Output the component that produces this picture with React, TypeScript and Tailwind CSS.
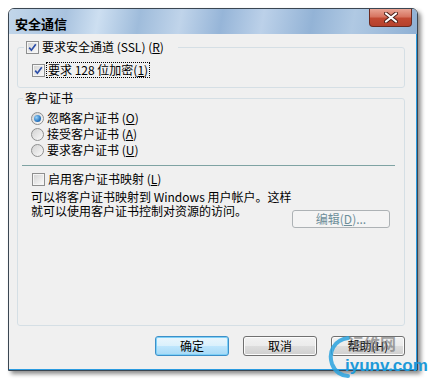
import React from 'react';

const cjk = "font-['Noto_Sans_CJK_SC','Noto_Sans',sans-serif]";

function CheckBox({ checked }: { checked?: boolean }) {
  return (
    <span className="flex h-[13px] w-[13px] shrink-0 items-center justify-center border border-[#8e8f8f] bg-white">
      <span className="flex h-[11px] w-[11px] items-center justify-center border border-[#f5f5f5] bg-[linear-gradient(135deg,#d6d6d6,#f8f8f8)]">
        {checked && (
          <svg width="9" height="9" viewBox="0 0 9 9">
            <path d="M1.2 4.6 L3.4 7.2 L7.8 1.2" fill="none" stroke="#2d4fa8" strokeWidth="1.7" />
          </svg>
        )}
      </span>
    </span>
  );
}

function Radio({ checked }: { checked?: boolean }) {
  return (
    <span className="flex h-[13px] w-[13px] shrink-0 items-center justify-center rounded-full border border-[#8e8f8f] bg-[linear-gradient(135deg,#d2d2d2,#fafafa)]">
      {checked && (
        <span className="h-[7px] w-[7px] rounded-full bg-[radial-gradient(circle_at_35%_35%,#9bd3f7,#2a78c2_60%,#1c5b9c)]" />
      )}
    </span>
  );
}

function Label({ text, k }: { text: string; k: string }) {
  return (
    <span className="whitespace-pre">
      {text}(<u>{k}</u>)
    </span>
  );
}

function DlgButton({ children, primary }: { children: React.ReactNode; primary?: boolean }) {
  return (
    <button
      className={
        primary
          ? 'h-[20px] w-[74px] rounded-[3px] border border-[#3c8fc8] bg-[linear-gradient(#eaf6fd_0%,#d9f0fc_50%,#bee6fd_51%,#a7d9f5_100%)] text-[12px] text-black shadow-[inset_0_0_0_1px_#7ed0f7]'
          : 'h-[20px] w-[74px] rounded-[3px] border border-[#707070] bg-[linear-gradient(#f2f2f2_0%,#ebebeb_50%,#dddddd_51%,#cfcfcf_100%)] text-[12px] text-black shadow-[inset_0_0_0_1px_#fcfcfc]'
      }
    >
      {children}
    </button>
  );
}

export default function App() {
  return (
    <div className={`relative h-[384px] w-[430px] overflow-hidden bg-white pl-[8px] pt-[8px] ${cjk}`}>
      <div className="flex h-[363px] w-[410px] flex-col overflow-hidden rounded-t-[6px] border border-[#3a4652] shadow-[3px_3px_4px_rgba(0,0,0,0.45)]">
        {/* title bar */}
        <div className="flex h-[25px] shrink-0 items-start justify-between bg-[linear-gradient(100deg,#c2d6ea_0%,#a9c3df_14%,#cddff1_22%,#9fbcdb_32%,#c0d4ea_42%,#96b5d8_52%,#bcd1e9_62%,#93b3d6_74%,#b0c9e3_84%,#8fb0d4_100%)]">
          <span className="ml-[6px] mt-[8px] text-[13px] font-bold leading-[13px] text-black">安全通信</span>
          <span className="mr-[5px] flex h-[18px] w-[43px] items-center justify-center rounded-b-[4px] border border-t-0 border-[#6c2a20] bg-[linear-gradient(#e9a494_0%,#d77561_45%,#c24a33_55%,#b5412d_100%)]">
            <svg width="14" height="11" viewBox="0 0 14 11">
              <path d="M2 1.5 L12 9.5 M12 1.5 L2 9.5" stroke="#4a1f18" strokeWidth="4" strokeLinecap="round" />
              <path d="M2 1.5 L12 9.5 M12 1.5 L2 9.5" stroke="#ffffff" strokeWidth="2.2" strokeLinecap="round" />
            </svg>
          </span>
        </div>

        {/* client area */}
        <div className="flex flex-1 flex-col border-b border-r border-[#2a9be0] bg-[#f0f0f0] text-[12px] leading-[14px] text-black">
          <fieldset className="ml-[8px] mr-[11px] mt-[6px] rounded-[3px] border border-[#d5dfe5] pb-[9px]">
            <legend className="ml-[6px] flex h-[14px] items-center gap-[3px] px-[2px] pr-[14px]">
              <CheckBox checked />
              <Label text="要求安全通道 (SSL) " k="R" />
            </legend>
            <div className="flex items-center gap-[1px] pl-[14px] pt-[8px]">
              <CheckBox checked />
              <span className="flex h-[16px] items-center border border-dotted border-black px-[1px]">
                <Label text="要求 128 位加密" k="1" />
              </span>
            </div>
          </fieldset>

          <fieldset className="mb-[10px] ml-[8px] mr-[11px] mt-[3px] flex-1 rounded-[3px] border border-[#d5dfe5]">
            <legend className="ml-[5px] flex h-[14px] items-center px-[2px]">客户证书</legend>
            <div className="flex flex-col pt-[5px]">
              <div className="flex h-[16px] items-center gap-[3px] pl-[13px]">
                <Radio checked />
                <Label text="忽略客户证书 " k="O" />
              </div>
              <div className="flex h-[16px] items-center gap-[3px] pl-[13px]">
                <Radio />
                <Label text="接受客户证书 " k="A" />
              </div>
              <div className="flex h-[16px] items-center gap-[3px] pl-[13px]">
                <Radio />
                <Label text="要求客户证书 " k="U" />
              </div>
              <div className="ml-[4px] mr-[9px] mt-[7px] h-px bg-[#7fa3a3]" />
              <div className="mt-[5px] flex h-[16px] items-center gap-[3px] pl-[14px]">
                <CheckBox />
                <Label text="启用客户证书映射 " k="L" />
              </div>
              <div className="mt-[3px] flex items-start justify-between pl-[13px] pr-[14px]">
                <div className="flex flex-col whitespace-nowrap">
                  <span className="h-[14px]">可以将客户证书映射到 Windows 用户帐户。这样</span>
                  <span className="h-[14px]">就可以使用客户证书控制对资源的访问。</span>
                </div>
                <button className="mt-[20px] h-[18px] w-[98px] rounded-[3px] border border-[#adb2b5] bg-[#f4f4f4] text-[12px] text-[#6d8e99]">
                  编辑(<u>D</u>)...
                </button>
              </div>
            </div>
          </fieldset>

          <div className="mb-[13px] mr-[11px] flex justify-end gap-[14px]">
            <DlgButton primary>确定</DlgButton>
            <DlgButton>取消</DlgButton>
            <DlgButton>帮助(H)</DlgButton>
          </div>
        </div>
      </div>

      {/* watermark */}
      <div className="pointer-events-none absolute left-[328px] top-[334px] h-[44px] w-[100px]">
        <svg className="absolute left-0 top-0" width="24" height="44" viewBox="0 0 24 44">
          <path d="M20 4 C6 6 0 18 4 30 C7 38 14 42 20 42" fill="none" stroke="#2aa2de" strokeWidth="4" strokeLinecap="round" opacity="0.85" />
        </svg>
        <span className="absolute left-[20px] top-[1px] font-['Noto_Sans_CJK_SC',sans-serif] text-[16px] font-bold leading-[17px] text-[#6a6a6a] opacity-60">
          运维网
        </span>
        <span className="absolute left-[17px] top-[22px] font-['Liberation_Sans',sans-serif] text-[17px] font-bold leading-[19px] text-[#1e9ad8]">
          iyunv.com
        </span>
      </div>
    </div>
  );
}
